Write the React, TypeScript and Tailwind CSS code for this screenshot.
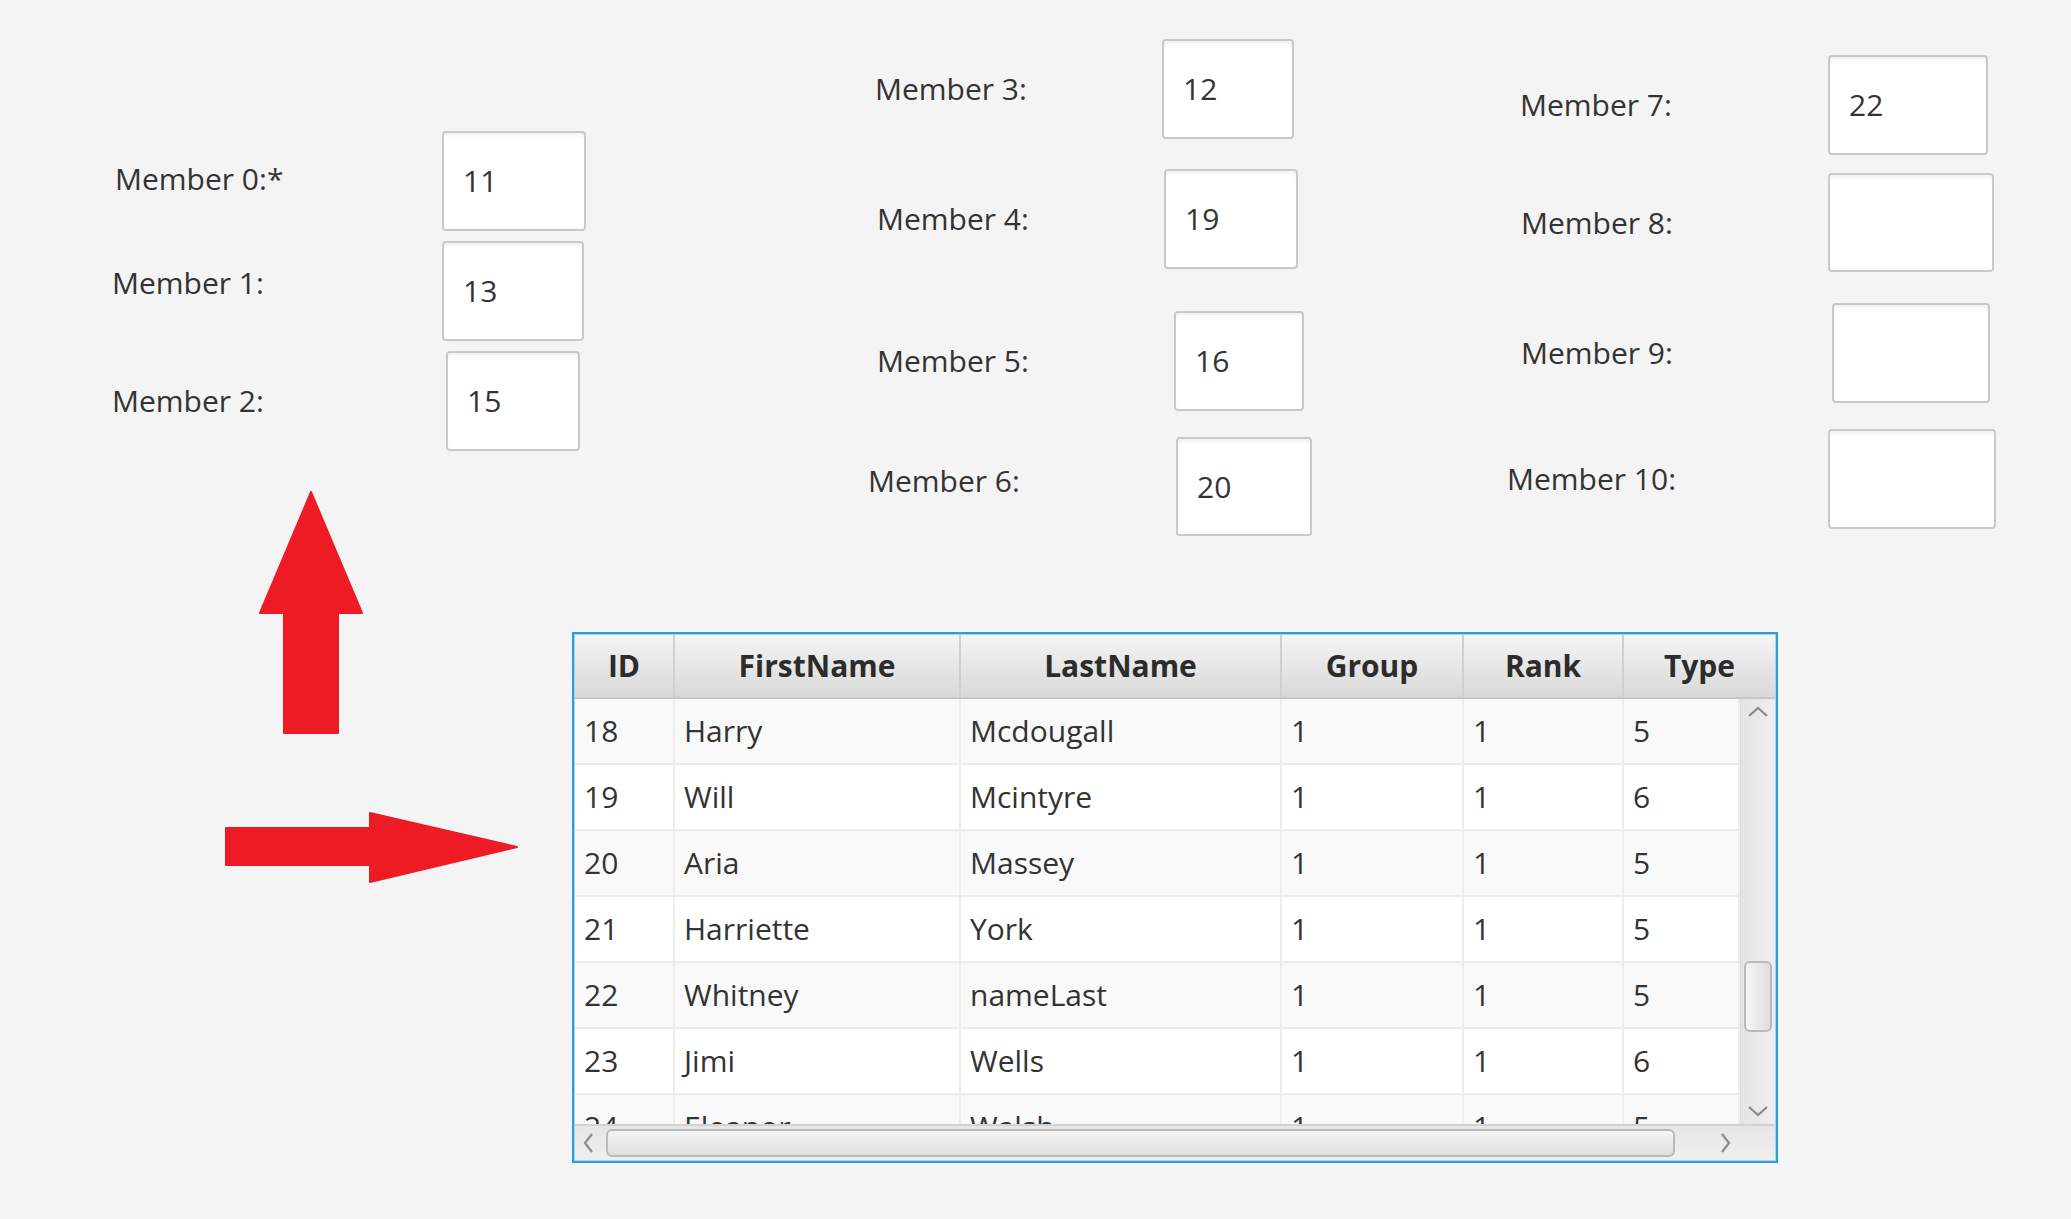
import React from 'react'

type FieldRow = {
  label: string
  value: string
  rowCls: string
  labelCls: string
  boxCls: string
}

// column 1 (x 0..800)
const col1: FieldRow[] = [
  { label: 'Member 0:*', value: '11', rowCls: 'mt-[131px] h-[100px]', labelCls: 'ml-[115px] w-[327px] mb-[4px]', boxCls: 'w-[144px]' },
  { label: 'Member 1:', value: '13', rowCls: 'mt-[10px] h-[100px]', labelCls: 'ml-[112px] w-[330px] mb-[16px]', boxCls: 'w-[142px]' },
  { label: 'Member 2:', value: '15', rowCls: 'mt-[10px] h-[100px]', labelCls: 'ml-[112px] w-[334px]', boxCls: 'w-[134px]' },
]

// column 2 (x 800..1400)
const col2: FieldRow[] = [
  { label: 'Member 3:', value: '12', rowCls: 'mt-[39px] h-[100px]', labelCls: 'ml-[75px] w-[287px]', boxCls: 'w-[132px]' },
  { label: 'Member 4:', value: '19', rowCls: 'mt-[30px] h-[100px]', labelCls: 'ml-[77px] w-[287px]', boxCls: 'w-[134px]' },
  { label: 'Member 5:', value: '16', rowCls: 'mt-[42px] h-[100px]', labelCls: 'ml-[77px] w-[297px]', boxCls: 'w-[130px]' },
  { label: 'Member 6:', value: '20', rowCls: 'mt-[26px] h-[99px]', labelCls: 'ml-[68px] w-[308px] mb-[11px]', boxCls: 'w-[136px]' },
]

// column 3 (x 1400..)
const col3: FieldRow[] = [
  { label: 'Member 7:', value: '22', rowCls: 'mt-[55px] h-[100px]', labelCls: 'ml-[120px] w-[308px]', boxCls: 'w-[160px]' },
  { label: 'Member 8:', value: '', rowCls: 'mt-[18px] h-[99px]', labelCls: 'ml-[121px] w-[307px]', boxCls: 'w-[166px]' },
  { label: 'Member 9:', value: '', rowCls: 'mt-[31px] h-[100px]', labelCls: 'ml-[121px] w-[311px]', boxCls: 'w-[158px]' },
  { label: 'Member 10:', value: '', rowCls: 'mt-[26px] h-[100px]', labelCls: 'ml-[107px] w-[321px]', boxCls: 'w-[168px]' },
]

const people = [
  ['18', 'Harry', 'Mcdougall', '1', '1', '5'],
  ['19', 'Will', 'Mcintyre', '1', '1', '6'],
  ['20', 'Aria', 'Massey', '1', '1', '5'],
  ['21', 'Harriette', 'York', '1', '1', '5'],
  ['22', 'Whitney', 'nameLast', '1', '1', '5'],
  ['23', 'Jimi', 'Wells', '1', '1', '6'],
  ['24', 'Eleanor', 'Walsh', '1', '1', '5'],
]

const colWidths = ['w-[100px]', 'w-[286px]', 'w-[321px]', 'w-[182px]', 'w-[160px]', 'w-[116px]']
const headers = [
  { title: 'ID', cls: 'w-[100px]' },
  { title: 'FirstName', cls: 'w-[286px]' },
  { title: 'LastName', cls: 'w-[321px]' },
  { title: 'Group', cls: 'w-[182px]' },
  { title: 'Rank', cls: 'w-[160px]' },
  { title: 'Type', cls: 'flex-1' },
]

export default function App() {
  return (
    <div className="w-[2071px] h-[1219px] overflow-hidden bg-[#f4f4f4] text-[#333] font-['Open_Sans',sans-serif] text-[30px]">
      {/* Form fields */}
      <div className="flex h-[491px]">
        <FieldColumn rows={col1} width="w-[800px]" />
        <FieldColumn rows={col2} width="w-[600px]" />
        <FieldColumn rows={col3} width="flex-1" />
      </div>

      {/* Arrows + table */}
      <div className="flex">
        <div className="w-[572px] shrink-0 flex flex-col">
          <svg className="ml-[259px]" width="104" height="243" viewBox="0 0 104 243">
            <path
              d="M52 1 L103 122 L79 122 L79 242 L25 242 L25 122 L1 122 Z"
              fill="#ed1c24"
              stroke="#ed1c24"
              strokeWidth="2"
              strokeLinejoin="round"
            />
          </svg>
          <svg className="ml-[225px] mt-[78px]" width="294" height="72" viewBox="0 0 294 72">
            <path
              d="M1 16 L145 16 L145 1 L292 35 L145 70 L145 53 L1 53 Z"
              fill="#ed1c24"
              stroke="#ed1c24"
              strokeWidth="2"
              strokeLinejoin="round"
            />
          </svg>
        </div>

        <DataTable />
      </div>
    </div>
  )
}

// ------------- FieldColumn -------------
function FieldColumn({ rows, width }: { rows: FieldRow[]; width: string }) {
  return (
    <div className={`${width} shrink-0 flex flex-col`}>
      {rows.map((r) => (
        <div key={r.label} className={`flex items-center shrink-0 ${r.rowCls}`}>
          <span className={`shrink-0 leading-none whitespace-nowrap ${r.labelCls}`}>{r.label}</span>
          <div
            className={`h-full shrink-0 flex items-center pl-[19px] bg-white rounded-[4px] border-2 border-[#c9c9c9] shadow-[inset_0_4px_4px_-2px_rgba(0,0,0,0.07)] leading-none ${r.boxCls}`}
          >
            {r.value}
          </div>
        </div>
      ))}
    </div>
  )
}

// ------------- DataTable -------------
function DataTable() {
  return (
    <div className="mt-[141px] w-[1206px] h-[531px] shrink-0 border-2 border-[#2a9ed6] shadow-[inset_0_0_0_1px_#a5d6ee] bg-white flex flex-col p-px">
      {/* Header */}
      <div className="flex h-[64px] shrink-0 bg-gradient-to-b from-[#f4f4f4] to-[#d9d9d9] border-b-2 border-[#c6c6c6]">
        {headers.map((h, i) => (
          <div
            key={h.title}
            className={`${h.cls} flex items-center justify-center font-bold leading-none text-[#2c2c2c] ${i < headers.length - 1 ? 'border-r-2 border-[#cfcfcf]' : ''}`}
          >
            {h.title}
          </div>
        ))}
      </div>

      {/* Body + vertical scrollbar */}
      <div className="flex h-[425px] shrink-0">
        <div className="w-[1165px] shrink-0 overflow-hidden">
          {people.map((p, idx) => (
            <div
              key={p[0]}
              className={`flex h-[66px] border-b-2 border-[#ececec] ${idx % 2 === 0 ? 'bg-[#f9f9f9]' : 'bg-white'}`}
            >
              {p.map((cell, ci) => (
                <div
                  key={ci}
                  className={`${colWidths[ci]} pl-[9px] flex items-center leading-none border-r-2 border-[#ededed]`}
                >
                  {cell}
                </div>
              ))}
            </div>
          ))}
        </div>
        <div className="flex-1 flex flex-col items-center bg-gradient-to-r from-[#e4e4e4] to-[#eeeeee] border-l border-[#dddddd]">
          <svg className="mt-[7px]" width="22" height="11" viewBox="0 0 22 11">
            <path d="M2 10 L11 2 L20 10" fill="none" stroke="#8a8a8a" strokeWidth="2.2" />
          </svg>
          <div className="mt-[244px] w-[28px] h-[71px] rounded-[6px] border-2 border-[#b9b9b9] bg-gradient-to-r from-[#f6f6f6] to-[#dedede]" />
          <svg className="mt-[74px]" width="22" height="11" viewBox="0 0 22 11">
            <path d="M2 1 L11 9 L20 1" fill="none" stroke="#8a8a8a" strokeWidth="2.2" />
          </svg>
        </div>
      </div>

      {/* Horizontal scrollbar */}
      <div className="flex-1 flex items-center bg-gradient-to-b from-[#e6e6e6] to-[#efefef] border-t-2 border-[#d2d2d2]">
        <svg className="ml-[8px] shrink-0" width="11" height="22" viewBox="0 0 11 22">
          <path d="M9 2 L2 11 L9 20" fill="none" stroke="#8a8a8a" strokeWidth="2.2" />
        </svg>
        <div className="ml-[12px] w-[1069px] h-[28px] shrink-0 rounded-[6px] border-2 border-[#b9b9b9] bg-gradient-to-b from-[#f6f6f6] to-[#dedede]" />
        <svg className="ml-[45px] shrink-0" width="11" height="22" viewBox="0 0 11 22">
          <path d="M2 2 L9 11 L2 20" fill="none" stroke="#8a8a8a" strokeWidth="2.2" />
        </svg>
      </div>
    </div>
  )
}
